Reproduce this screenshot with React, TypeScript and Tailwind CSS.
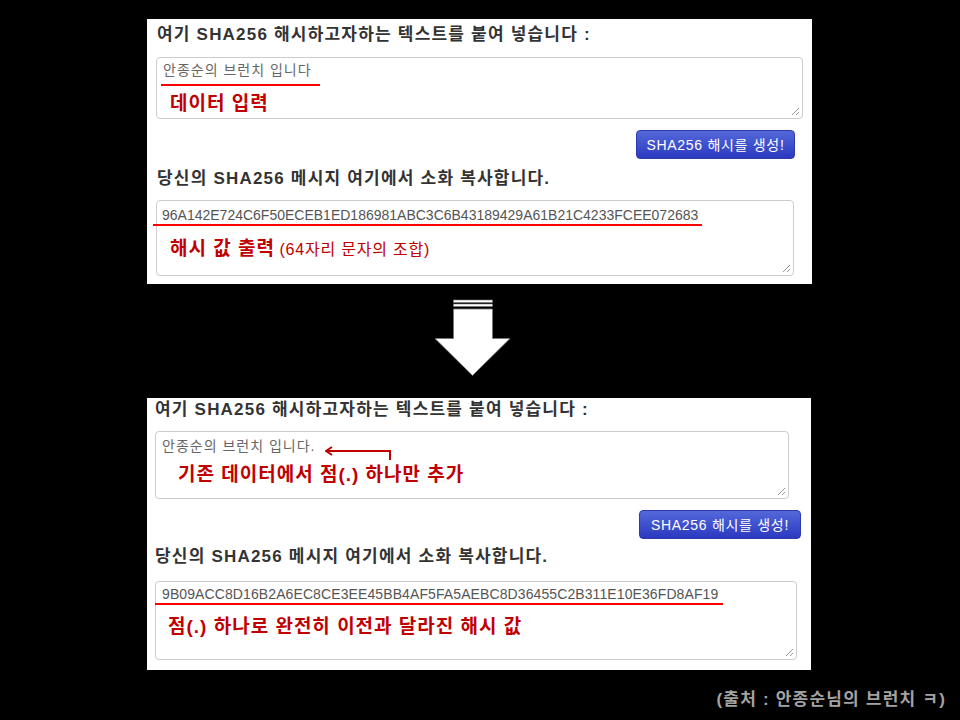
import React from 'react';

const font = "font-['Liberation_Sans','Noto_Sans_CJK_KR',sans-serif]";

function Grip() {
  return (
    <svg className="absolute right-[2px] bottom-[2px]" width="9" height="9" viewBox="0 0 9 9">
      <line x1="1" y1="8" x2="8" y2="1" stroke="#999" strokeWidth="1" />
      <line x1="5" y1="8" x2="8" y2="5" stroke="#999" strokeWidth="1" />
    </svg>
  );
}

function HashButton({ width }: { width: string }) {
  return (
    <button
      className={`${width} h-[29px] rounded-[4px] border border-[#2d3aa8] bg-gradient-to-b from-[#5468da] to-[#2c38c0] text-white text-[14px] tracking-[0.7px] leading-none`}
    >
      SHA256 해시를 생성!
    </button>
  );
}

export default function App() {
  return (
    <div className={`w-[960px] h-[720px] bg-black flex flex-col overflow-hidden ${font}`}>
      {/* before */}
      <div className="mt-[19px] ml-[147px] w-[665px] h-[265px] bg-white flex flex-col">
        <div className="pl-[10px] pt-[4px] text-[17px] leading-[23px] tracking-[1.2px] font-bold text-[#333]">
          여기 SHA256 해시하고자하는 텍스트를 붙여 넣습니다 :
        </div>
        <div className="relative mt-[11px] ml-[9px] w-[647px] h-[62px] border border-[#ccc] rounded-[4px]">
          <div className="pl-[6px] pt-[2px] text-[14px] leading-[20px] tracking-[1px] text-[#666]">안종순의 브런치 입니다</div>
          <div className="mt-[4px] ml-[4px] w-[159px] h-[2px] bg-[#ff0000]" />
          <div className="mt-[5px] pl-[13px] text-[19px] leading-[26px] tracking-[1px] font-bold text-[#c00000]">데이터 입력</div>
          <Grip />
        </div>
        <div className="mt-[11px] flex justify-end pr-[17px]">
          <HashButton width="w-[159px]" />
        </div>
        <div className="mt-[8px] pl-[10px] text-[17px] leading-[23px] tracking-[1.2px] font-bold text-[#333]">
          당신의 SHA256 메시지 여기에서 소화 복사합니다.
        </div>
        <div className="relative mt-[10px] ml-[9px] w-[638px] h-[76px] border border-[#ccc] rounded-[4px]">
          <div className="pl-[5px] pt-[4px] text-[14px] leading-[20px] text-[#555]">
            96A142E724C6F50ECEB1ED186981ABC3C6B43189429A61B21C4233FCEE072683
          </div>
          <div className="-mt-[1px] -ml-[4px] w-[549px] h-[2px] bg-[#ff0000]" />
          <div className="mt-[10px] pl-[13px] leading-[26px] text-[#c00000]">
            <span className="text-[19px] tracking-[1px] font-bold">해시 값 출력</span>{' '}
            <span className="text-[16px] tracking-[0.8px]">(64자리 문자의 조합)</span>
          </div>
          <Grip />
        </div>
      </div>

      {/* arrow */}
      <div className="mt-[14px] ml-[435px] h-[79px]">
        <svg width="77" height="79" viewBox="435 298 77 79">
          <rect x="453.5" y="300" width="39" height="2.5" fill="#fff" stroke="#777" strokeWidth="0.6" />
          <rect x="453.5" y="304" width="39" height="2.5" fill="#fff" stroke="#777" strokeWidth="0.6" />
          <path d="M453.5 309 H492.5 V338.5 H510 L472.5 375.5 L435 338.5 H453.5 Z" fill="#fff" stroke="#777" strokeWidth="0.8" />
        </svg>
      </div>

      {/* after */}
      <div className="mt-[21px] ml-[147px] w-[664px] h-[272px] bg-white flex flex-col">
        <div className="pl-[8px] text-[17px] leading-[23px] tracking-[1.2px] font-bold text-[#333]">
          여기 SHA256 해시하고자하는 텍스트를 붙여 넣습니다 :
        </div>
        <div className="relative mt-[10px] ml-[8px] w-[634px] h-[68px] border border-[#ccc] rounded-[4px]">
          <div className="flex items-start pl-[6px] pt-[4px]">
            <span className="text-[14px] leading-[20px] tracking-[1px] text-[#666]">안종순의 브런치 입니다.</span>
            <svg className="mt-[10px] ml-[10px]" width="68" height="15" viewBox="0 0 68 15">
              <path d="M1 5 H65 V14" fill="none" stroke="#c00000" strokeWidth="2" />
              <path d="M7 1 L1 5 L7 9" fill="none" stroke="#c00000" strokeWidth="2" />
            </svg>
          </div>
          <div className="mt-[1px] pl-[22px] text-[19px] leading-[26px] tracking-[1px] font-bold text-[#c00000]">
            기존 데이터에서 점(.) 하나만 추가
          </div>
          <Grip />
        </div>
        <div className="mt-[11px] flex justify-end pr-[10px]">
          <HashButton width="w-[162px]" />
        </div>
        <div className="mt-[6px] pl-[8px] text-[17px] leading-[23px] tracking-[1.2px] font-bold text-[#333]">
          당신의 SHA256 메시지 여기에서 소화 복사합니다.
        </div>
        <div className="relative mt-[13px] ml-[8px] w-[642px] h-[79px] border border-[#ccc] rounded-[4px]">
          <div className="pl-[6px] pt-[2px] text-[14px] leading-[20px] tracking-[0.1px] text-[#555]">
            9B09ACC8D16B2A6EC8CE3EE45BB4AF5FA5AEBC8D36455C2B311E10E36FD8AF19
          </div>
          <div className="-mt-[1px] -ml-[1px] w-[568px] h-[2px] bg-[#ff0000]" />
          <div className="mt-[9px] pl-[12px] text-[19px] leading-[26px] tracking-[1px] font-bold text-[#c00000]">
            점(.) 하나로 완전히 이전과 달라진 해시 값
          </div>
          <Grip />
        </div>
      </div>

      <div className="mt-[18px] pr-[14px] text-right text-[17px] leading-[24px] tracking-[1.2px] font-bold text-[#a3a3a3]">
        (출처 : 안종순님의 브런치 ㅋ)
      </div>
    </div>
  );
}
